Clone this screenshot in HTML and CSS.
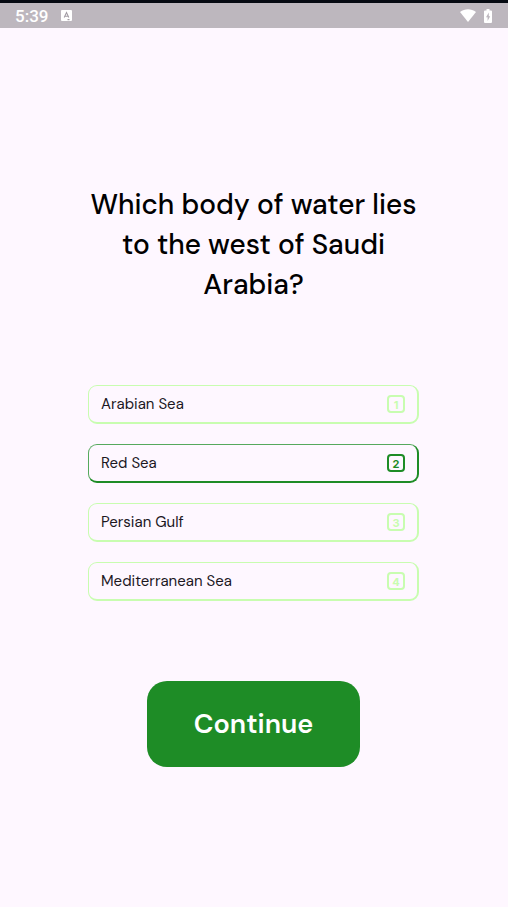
FILE: index.html
```html
<!DOCTYPE html>
<html lang="en">
<head>
<meta charset="utf-8">
<meta name="viewport" content="width=device-width, initial-scale=1">
<title>Quiz</title>
<link rel="stylesheet" href="styles.css">
</head>
<body>
<header class="status">
  <div class="status-group">
    <span class="time">5:39</span>
    <svg class="badge" viewBox="0 0 12 12" aria-hidden="true"><rect x="1" width="11" height="11" rx="1" fill="#fff"/><path d="M4.200 7.600 6.500 2.600l2.300 5M5 6.200h3M7.500 9.600h2" fill="none" stroke="#a39da5" stroke-width="1.100"/></svg>
  </div>
  <div class="status-group">
    <svg class="wifi" viewBox="0 0 16 13" aria-hidden="true"><path d="M0 3C4.800-.6 11.200-.6 16 3L8 13Z" fill="#fff"/></svg>
    <svg class="battery" viewBox="0 0 8 14" aria-hidden="true"><path d="M2.500 0h3v1.500H7a1 1 0 0 1 1 1V13a1 1 0 0 1-1 1H1a1 1 0 0 1-1-1V2.500a1 1 0 0 1 1-1h1.500Z" fill="#fff"/><path d="M4.800 3.500 2 8.300h1.600V12l2.600-4.800H4.800Z" fill="#bdb7be"/></svg>
  </div>
</header>
<main>
  <form class="quiz">
    <h1 id="question">Which body of water lies to the west of Saudi Arabia?</h1>
    <div class="options" role="radiogroup" aria-labelledby="question">
      <label class="option"><input type="radio" name="answer"><span>Arabian Sea</span><span class="number">1</span></label>
      <label class="option"><input type="radio" name="answer" checked><span>Red Sea</span><span class="number">2</span></label>
      <label class="option"><input type="radio" name="answer"><span>Persian Gulf</span><span class="number">3</span></label>
      <label class="option"><input type="radio" name="answer"><span>Mediterranean Sea</span><span class="number">4</span></label>
    </div>
    <button class="continue" type="button">Continue</button>
  </form>
</main>
</body>
</html>
```
FILE: styles.css
```css
* {
  box-sizing: border-box;
}

body {
  margin: 0;
  min-height: 100vh;
  background: #fef7ff;
  color: #000;
  font-family: "DM Sans", Inter, sans-serif;
}

.status {
  display: flex;
  align-items: center;
  justify-content: space-between;
  height: 28px;
  padding: 0 16px 0 15px;
  border-top: 3px solid #060a12;
  background: #bdb7be;
  color: #fff;
}

.status-group {
  display: flex;
  align-items: center;
  gap: 8px;
}

.time {
  margin-right: 4px;
  font: 500 17px/24px Roboto, sans-serif;
}

.badge {
  width: 12px;
  height: 12px;
}

.wifi {
  width: 16px;
  height: 13px;
}

.battery {
  width: 8px;
  height: 14px;
}

.quiz {
  display: flex;
  flex-direction: column;
  align-items: center;
  padding: 157px 89px 40px 88px;
}

h1 {
  margin: 0 0 80px;
  font-size: 28px;
  font-weight: 500;
  line-height: 40px;
  text-align: center;
}

.options {
  display: grid;
  gap: 20px;
  width: 100%;
}

.option {
  --line: #c8fdb0;
  --edge: #c8fdb0;
  display: flex;
  align-items: center;
  justify-content: space-between;
  height: 39px;
  padding: 0 12px;
  border: solid var(--line);
  border-width: 1px 2px 2px 1px;
  border-top-color: var(--edge);
  border-left-color: var(--edge);
  border-radius: 9px;
  color: #1c181f;
  font-size: 15px;
  cursor: pointer;
}

.option:has(input:checked) {
  --line: #1e8c26;
  --edge: #56a95d;
}

.option input {
  position: absolute;
  opacity: 0;
  pointer-events: none;
}

.number {
  display: grid;
  place-items: center;
  width: 18px;
  height: 18px;
  padding-top: 2px;
  border: 2px solid var(--line);
  border-radius: 4px;
  color: var(--line);
  font: 700 11px/12px Inter, sans-serif;
}

.continue {
  margin-top: 80px;
  padding: 23px 47px;
  border: 0;
  border-radius: 20px;
  background: #1e8c26;
  color: #fff;
  font: 600 27px/40px "DM Sans", Inter, sans-serif;
  cursor: pointer;
}
```
